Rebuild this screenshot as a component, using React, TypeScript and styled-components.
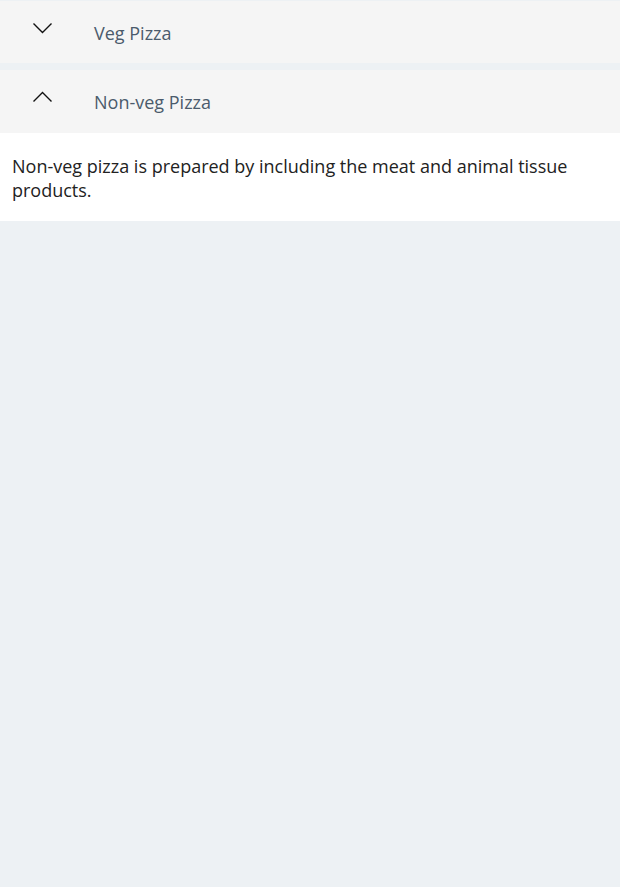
import React, { useState } from "react";
import styled, { createGlobalStyle } from "styled-components";

const Global = createGlobalStyle`
  html, body { margin: 0; padding: 0; background: #edf1f4; }
  body { font-family: "Open Sans", "Noto Sans", sans-serif; }
`;

const Accordion = styled.div`
  display: flex;
  flex-direction: column;
  gap: 7px;
  padding-top: 1px;
`;

const Item = styled.div`
  display: flex;
  flex-direction: column;
`;

const Header = styled.button<{ $open: boolean }>`
  display: flex;
  align-items: center;
  height: ${(p) => (p.$open ? 63 : 62)}px;
  padding: 0;
  padding-bottom: ${(p) => (p.$open ? 1 : 0)}px;
  border: none;
  background: #f5f5f5;
  cursor: pointer;
  text-align: left;
  font-family: inherit;
`;

const IconBox = styled.span`
  display: flex;
  justify-content: center;
  width: 85px;
  margin-top: -9px;
`;

const Title = styled.span`
  font-size: 18px;
  color: #4b5b6c;
  margin-left: 9px;
  padding-top: 2px;
`;

const Content = styled.div`
  background: #ffffff;
  padding: 21px 12px 19px 12px;
  font-size: 18px;
  line-height: 24px;
  color: #222222;
`;

const Chevron = ({ up }: { up: boolean }) => (
  <svg width="21" height="12" viewBox="0 0 21 12" fill="none">
    <path
      d={up ? "M1.5 10.5 L10.5 1.5 L19.5 10.5" : "M1.5 1.5 L10.5 10.5 L19.5 1.5"}
      stroke="#111"
      strokeWidth="1.4"
    />
  </svg>
);

const items = [
  { title: "Veg Pizza", body: "Veg pizza is prepared using vegetables and cheese toppings." },
  {
    title: "Non-veg Pizza",
    body: "Non-veg pizza is prepared by including the meat and animal tissue products.",
  },
];

export default function App() {
  const [open, setOpen] = useState<number>(1);
  return (
    <>
      <Global />
      <Accordion>
        {items.map((it, i) => (
          <Item key={it.title}>
            <Header $open={open === i} onClick={() => setOpen(open === i ? -1 : i)}>
              <IconBox>
                <Chevron up={open === i} />
              </IconBox>
              <Title>{it.title}</Title>
            </Header>
            {open === i && <Content>{it.body}</Content>}
          </Item>
        ))}
      </Accordion>
    </>
  );
}
